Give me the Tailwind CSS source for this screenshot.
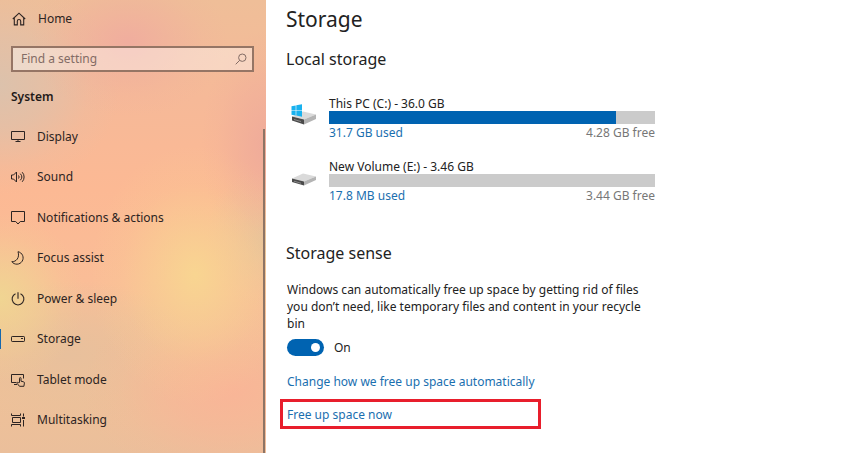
<!DOCTYPE html>
<html lang="en">
<head>
    <meta charset="UTF-8">
    <meta name="viewport" content="width=device-width, initial-scale=1.0">
    <title>Settings - Storage</title>
    <script src="https://cdn.jsdelivr.net/npm/@tailwindcss/browser@4"></script>
    <style>
        .acrylic {
            background:
                radial-gradient(ellipse 105px 130px at 195px 275px, #f8d591, #f8d59190 35%, #f8d59128 70%, #f8d59100 100%),
                radial-gradient(ellipse 85px 85px at 0px 298px, #f0d592, #f0d59290 40%, #f0d59228 75%, #f0d59200 100%),
                radial-gradient(ellipse 100px 75px at 128px 42px, #f0ad9e, #f0ad9e80 40%, #f0ad9e20 75%, #f0ad9e00 100%),
                radial-gradient(ellipse 65px 115px at 266px 145px, #efab9a, #efab9a90 40%, #efab9a28 75%, #efab9a00 100%),
                radial-gradient(ellipse 120px 110px at 0px 85px, #dcc2ac, #dcc2aca0 40%, #dcc2ac28 75%, #dcc2ac00 100%),
                radial-gradient(ellipse 60px 70px at 266px 238px, #e5c49b, #e5c49b80 45%, #e5c49b00 100%),
                radial-gradient(ellipse 150px 95px at 230px 390px, #f9b597, #f9b597a0 40%, #f9b59728 75%, #f9b59700 100%),
                radial-gradient(ellipse 130px 75px at 70px 355px, #e8c09c, #e8c09c90 45%, #e8c09c00 100%),
                linear-gradient(#efbe98 0%, #f6b998 22%, #fcb994 42%, #fabd97 62%, #efc198 85%, #ebbf9b 100%);
        }
    </style>
</head>
<body class="bg-white font-['Noto_Sans','Open_Sans',sans-serif] text-xs text-[#222]">
    <div class="flex min-h-screen">
        <!-- Sidebar -->
        <aside class="acrylic relative flex w-[266px] shrink-0 flex-col pt-[7px] pb-[13px] text-[#2d2422]">
            <a href="#" class="flex h-6 items-center gap-3 pl-3">
                <svg class="size-[14px]" viewBox="0 0 14 14" fill="none" stroke="currentColor" stroke-width="1.1">
                    <path d="M.8 7 7 1.2 13.2 7M2.3 5.8v7.1h3V9.2a1.7 1.7 0 0 1 3.4 0v3.7h3V5.8"/>
                </svg>
                Home
            </a>
            <div class="mt-[15px] mr-3 ml-[11px] flex h-[26px] items-center border-2 border-[#957565] bg-white/40 pr-[5px] pl-2">
                <input type="search" aria-label="Find a setting" placeholder="Find a setting" class="min-w-0 flex-1 outline-none placeholder:text-[#836c65]">
                <svg class="size-3" viewBox="0 0 12 12" fill="none" stroke="#836c65">
                    <circle cx="7.3" cy="4.7" r="3.7"/>
                    <path d="M4.7 7.3.7 11.3"/>
                </svg>
            </div>
            <h2 class="mt-[17px] ml-[11px] h-[18px] font-semibold text-[#1f1a19]">System</h2>
            <nav class="mt-[10px] flex flex-1 flex-col justify-between">
                <a href="#" class="flex h-10 items-center gap-3 pl-[11px]">
                    <svg class="size-[14px]" viewBox="0 0 14 14" fill="none" stroke="currentColor">
                        <path d="M.5 1.5h13v8H.5zM7 9.5v2M4.5 11.5h5"/>
                    </svg>
                    Display
                </a>
                <a href="#" class="flex h-10 items-center gap-3 pl-[11px]">
                    <svg class="size-[14px]" viewBox="0 0 14 14" fill="none" stroke="currentColor">
                        <path d="M.5 5h2l3-3v10l-3-3h-2zM7.5 5.500a2.300 2.300 0 0 1 0 3M9.300 3.700a4.800 4.800 0 0 1 0 6.600M11.200 2.200a7 7 0 0 1 0 9.600"/>
                    </svg>
                    Sound
                </a>
                <a href="#" class="flex h-10 items-center gap-3 pl-[11px]">
                    <svg class="size-[14px]" viewBox="0 0 14 14" fill="none" stroke="currentColor">
                        <path d="M.5.5h13v10H9.300L7 13l-2.300-2.500H.5z"/>
                    </svg>
                    Notifications &amp; actions
                </a>
                <a href="#" class="flex h-10 items-center gap-3 pl-[11px]">
                    <svg class="size-[14px]" viewBox="0 0 14 14" fill="none" stroke="currentColor" stroke-linejoin="round">
                        <path d="M7 .7a6.300 6.300 0 1 1-6.200 10C5 11 9 6.800 7 .7z"/>
                    </svg>
                    Focus assist
                </a>
                <a href="#" class="flex h-10 items-center gap-3 pl-[11px]">
                    <svg class="size-[14px]" viewBox="0 0 14 14" fill="none" stroke="currentColor" stroke-width="1.1">
                        <path d="M7 .3v6.500M4.500 1.700a5.900 5.900 0 1 0 5 0"/>
                    </svg>
                    Power &amp; sleep
                </a>
                <a href="#" aria-current="page" class="flex h-10 items-center">
                    <span class="h-5 w-px bg-[#1568ad]"></span>
                    <svg class="mr-3 ml-[10px] size-[14px]" viewBox="0 0 14 14" fill="none" stroke="currentColor">
                        <rect x=".5" y="4.5" width="13" height="5" rx=".7"/>
                        <path d="M10 6.500h2"/>
                    </svg>
                    Storage
                </a>
                <a href="#" class="flex h-10 items-center gap-3 pl-[11px]">
                    <svg class="size-[14px]" viewBox="0 0 14 14" fill="none" stroke="currentColor">
                        <path d="M5.500 9.500h-5v-8h12v4M3 11.500h3"/>
                        <path d="M8.500 9.500V5.300c0-1 1.500-1 1.500 0v2.900l2.500.6c.7.200 1 .6.900 1.300l-.5 3.200H8.500l-2.300-2.800c-.6-.8.4-1.600 1.100-.9z"/>
                    </svg>
                    Tablet mode
                </a>
                <a href="#" class="flex h-10 items-center gap-3 pl-[11px]">
                    <svg class="size-[14px]" viewBox="0 0 14 14" fill="none" stroke="currentColor">
                        <path d="M.5.5v2h9v-2M1.500 4.500h8v5h-8zM.5 13.500v-2h9v2M12.500.5v3M12.500 7v6.500"/>
                        <path d="M11 5h3" stroke-width="2"/>
                    </svg>
                    Multitasking
                </a>
            </nav>
            <!-- Scrollbar thumb -->
            <div class="absolute top-[129px] right-px bottom-0 w-[2px] bg-[#8d7465]"></div>
        </aside>

        <!-- Storage page -->
        <main class="min-w-0 flex-1 pt-1 pl-5">
            <h1 class="text-[21px] leading-[30px]">Storage</h1>
            <h2 class="mt-[14px] text-base leading-[22px]">Local storage</h2>

            <div class="mt-[25px] flex w-full max-w-[369px] gap-3 pl-1">
                <svg class="mt-2 h-[22px] w-[27px] shrink-0" viewBox="0 0 27 22">
                    <path d="m2 13.500 11-5 13 3-12 5z" fill="#dadada"/>
                    <path d="m2 13.500 12 3v5l-12-4z" fill="#4a4a4a"/>
                    <path d="m14 16.500 12-5V16l-12 5.500z" fill="#b4b4b4"/>
                    <path d="m4 16.500 7 2" stroke="#8a8a8a"/>
                    <path d="m1.500 3.200 4.200-.8v4.800H1.500zM6.300 2.300 12 1.200v6H6.300zM1.500 7.800h4.200v4.700l-4.200-.7zM6.300 7.800H12v5.900l-5.700-1.100z" fill="#19b2ef"/>
                </svg>
                <div class="flex-1">
                    <p class="h-4 leading-[18px]">This PC (C:) - 36.0 GB</p>
                    <div class="h-[13px] bg-[#cbcbcb]"><div class="h-full bg-[#0063b1]" style="width: 88%"></div></div>
                    <div class="mt-px flex justify-between leading-4">
                        <a href="#" class="text-[#1a6faf]">31.7 GB used</a>
                        <span class="text-[#777]">4.28 GB free</span>
                    </div>
                </div>
            </div>

            <div class="mt-[17px] flex w-full max-w-[369px] gap-3 pl-1">
                <svg class="mt-2 h-[22px] w-[27px] shrink-0" viewBox="0 0 27 22">
                    <path d="m2 12.500 11-5 13 3-12 5z" fill="#dadada"/>
                    <path d="m2 12.500 12 3v4l-12-3.500z" fill="#4a4a4a"/>
                    <path d="m14 15.500 12-5V14l-12 5.500z" fill="#b4b4b4"/>
                    <path d="m4 15.200 7 2" stroke="#8a8a8a"/>
                </svg>
                <div class="flex-1">
                    <p class="h-4 leading-[18px]">New Volume (E:) - 3.46 GB</p>
                    <div class="h-[13px] bg-[#cbcbcb]"></div>
                    <div class="mt-px flex justify-between leading-4">
                        <a href="#" class="text-[#1a6faf]">17.8 MB used</a>
                        <span class="text-[#777]">3.44 GB free</span>
                    </div>
                </div>
            </div>

            <h2 class="mt-[38px] text-base leading-[22px]">Storage sense</h2>
            <p class="mt-[17px] max-w-[370px] pl-px leading-[17px]">Windows can automatically free up space by getting rid of files you don’t need, like temporary files and content in your recycle bin</p>
            <label class="mt-[7px] flex h-[17px] w-fit items-center gap-[10px] pl-px">
                <input type="checkbox" role="switch" checked class="peer sr-only">
                <span class="flex h-[17px] w-[37px] items-center justify-end rounded-full bg-[#0063b1] pr-1"><span class="size-[9px] rounded-full bg-white"></span></span>
                On
            </label>
            <a href="#" class="mt-[17px] block w-fit pl-px leading-[17px] text-[#1a6faf]">Change how we free up space automatically</a>
            <a href="#" class="mt-[9px] -ml-[6px] flex h-[30px] w-[261px] items-center border-3 border-[#e81e2c] pt-[2px] pl-1 text-[#1a6faf]">Free up space now</a>
        </main>
    </div>
</body>
</html>
